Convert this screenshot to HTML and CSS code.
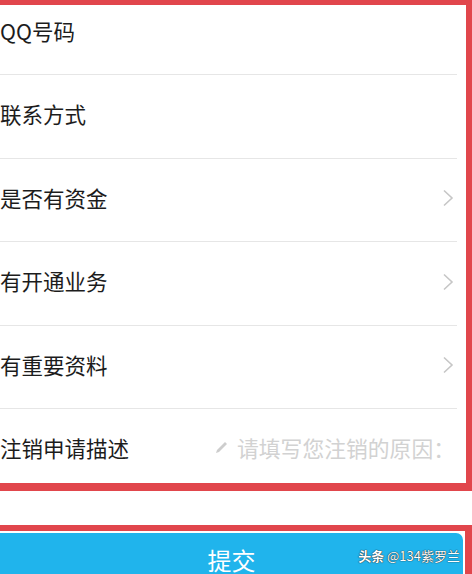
FILE: index.html
```html
<!DOCTYPE html>
<html lang="zh">
<head>
<meta charset="utf-8">
<title>注销申请</title>
<link rel="stylesheet" href="styles.css">
</head>
<body>
<div class="panel">
  <div class="list">
    <div class="row"><span class="label">QQ号码</span></div>
    <div class="row"><span class="label">联系方式</span></div>
    <div class="row"><span class="label">是否有资金</span><svg class="chev" width="12" height="18" viewBox="0 0 12 18"><polyline points="2,1.5 10,9 2,16.5" fill="none" stroke="#c6c6c6" stroke-width="1.6"/></svg></div>
    <div class="row"><span class="label">有开通业务</span><svg class="chev" width="12" height="18" viewBox="0 0 12 18"><polyline points="2,1.5 10,9 2,16.5" fill="none" stroke="#c6c6c6" stroke-width="1.6"/></svg></div>
    <div class="row"><span class="label">有重要资料</span><svg class="chev" width="12" height="18" viewBox="0 0 12 18"><polyline points="2,1.5 10,9 2,16.5" fill="none" stroke="#c6c6c6" stroke-width="1.6"/></svg></div>
    <div class="row"><span class="label">注销申请描述</span><span class="placeholder"><svg class="pencil" width="13" height="13" viewBox="0 0 13 13"><path d="M1 12 L2 9 L10 1 L12 3 L4 11 Z" fill="#cdcdcd"/></svg>请填写您注销的原因：</span></div>
  </div>
</div>
<div class="panel2">
  <div class="submit">
    <span class="submit-text">提交</span>
    <span class="mark"><b>头条</b> @134紫罗兰</span>
  </div>
</div>
</body>
</html>
```
FILE: styles.css
```css
html, body {
  margin: 0;
  padding: 0;
  background: #ffffff;
}
body {
  width: 472px;
  height: 574px;
  overflow: hidden;
  font-family: "Noto Sans CJK SC", "Noto Sans", sans-serif;
}
.panel {
  border-style: solid;
  border-color: #e1464c;
  border-width: 5px 6px 8px 0;
  height: 478px;
  overflow: hidden;
  background: #fff;
}
.list {
  margin-top: -13.5px;
}
.row {
  height: 82.5px;
  border-bottom: 1px solid #e6e6e6;
  margin-right: 9px;
  display: flex;
  align-items: center;
  justify-content: space-between;
}
.label {
  font-size: 21.5px;
  color: #1c1c1c;
  line-height: 1;
  padding-bottom: 5px;
}
.chev {
  margin-right: 3px;
  margin-bottom: 3px;
  display: block;
}
.placeholder {
  display: flex;
  align-items: center;
  font-size: 21.8px;
  color: #d2d2d2;
  line-height: 1;
  margin-right: 2px;
  padding-bottom: 5px;
}
.pencil {
  margin-right: 9px;
  display: block;
}
.panel2 {
  margin-top: 34px;
  border-style: solid;
  border-color: #e1464c;
  border-width: 6px 7px 0 0;
  padding: 2px 2px 0 0;
  background: #fff;
}
.submit {
  position: relative;
  height: 70px;
  background: #20b4ec;
  border-top-right-radius: 7px;
  text-align: center;
  padding-top: 15px;
  box-sizing: border-box;
}
.submit-text {
  font-size: 24px;
  line-height: 1;
  color: #ffffff;
}
.mark {
  position: absolute;
  right: 3px;
  top: 16px;
  font-size: 13px;
  line-height: 1;
  color: #ffffff;
  text-shadow: 0 0 1px #222, 0 0 1px #222;
}
.mark b {
  font-weight: 700;
}
```
